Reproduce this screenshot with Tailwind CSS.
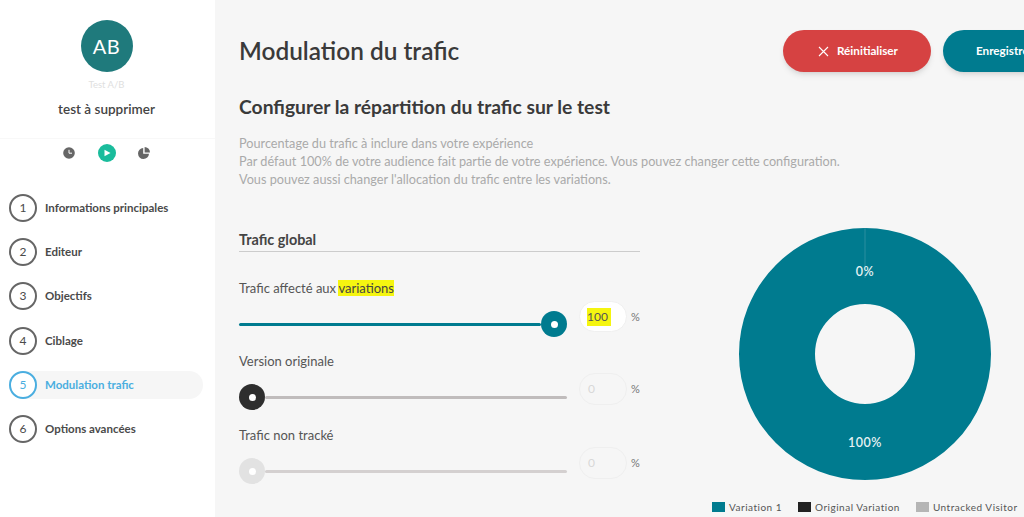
<!DOCTYPE html>
<html lang="fr">
<head>
    <meta charset="UTF-8">
    <title>Modulation du trafic</title>
    <script src="https://cdn.jsdelivr.net/npm/@tailwindcss/browser@4"></script>
</head>
<body class="bg-[#f6f6f6] h-[517px] w-[1024px] overflow-hidden font-['Lato',sans-serif] text-[#3a3a3a]">
    <div class="flex h-[517px]">
        <!-- Sidebar -->
        <aside class="w-[215px] shrink-0 bg-white h-full flex flex-col">
            <div class="flex flex-col items-center pt-[20px] pr-[2px] h-[139px] border-b border-[#f8f8f8]">
                <div class="w-[52px] h-[52px] rounded-full bg-[#1f7a7c] text-white text-[20px] tracking-[0.5px] flex items-center justify-center">AB</div>
                <div class="text-[9.5px] leading-[12px] text-[#e0e0e0] mt-[7px]">Test A/B</div>
                <div class="text-[13.5px] leading-[18px] font-semibold text-[#444] mt-[9px]">test à supprimer</div>
            </div>
            <div class="flex items-center pl-[63px] h-[28px] mb-[27px]">
                <svg width="12" height="12" viewBox="1 1 12 12" class="mr-[23px]"><circle cx="7" cy="7" r="5.8" fill="#666"/><path d="M7 3.8V7.2H10" stroke="#fff" stroke-width="1" fill="none"/></svg>
                <svg width="18" height="18" viewBox="0 0 18 18" class="mr-[21px]"><circle cx="9" cy="9" r="9" fill="#1abc9c"/><path d="M6.5 5.8L12.5 9L6.5 12.2Z" fill="#fff"/></svg>
                <svg width="14" height="14" viewBox="0 0 14 14"><path d="M6.2 2A5.5 5.5 0 1 0 12 7.8H6.2Z" fill="#666"/><path d="M7.6 1A5.5 5.5 0 0 1 13 6.4H7.6Z" fill="#666"/></svg>
            </div>
            <nav class="flex flex-col gap-[16px] pl-[9px] text-[11.5px] font-bold text-[#4a4a4a]">
                <div class="flex items-center h-[28px]"><span class="w-[28px] h-[28px] rounded-full border-2 border-[#666] flex items-center justify-center text-[12px] font-normal mr-[8px]">1</span>Informations principales</div>
                <div class="flex items-center h-[28px]"><span class="w-[28px] h-[28px] rounded-full border-2 border-[#666] flex items-center justify-center text-[12px] font-normal mr-[8px]">2</span>Editeur</div>
                <div class="flex items-center h-[28px]"><span class="w-[28px] h-[28px] rounded-full border-2 border-[#666] flex items-center justify-center text-[12px] font-normal mr-[8px]">3</span>Objectifs</div>
                <div class="flex items-center h-[28px] mt-[1px]"><span class="w-[28px] h-[28px] rounded-full border-2 border-[#666] flex items-center justify-center text-[12px] font-normal mr-[8px]">4</span>Ciblage</div>
                <div class="flex items-center h-[28px] w-[194px] rounded-full bg-[#f6f6f6] text-[#4aaee0]"><span class="w-[28px] h-[28px] rounded-full border-2 border-[#4aaee0] bg-white flex items-center justify-center text-[12px] font-normal mr-[8px]">5</span>Modulation trafic</div>
                <div class="flex items-center h-[28px]"><span class="w-[28px] h-[28px] rounded-full border-2 border-[#666] flex items-center justify-center text-[12px] font-normal mr-[8px]">6</span>Options avancées</div>
            </nav>
        </aside>

        <!-- Main -->
        <main class="flex-1 pl-[24px] min-w-0">
            <div class="flex items-center h-[42px] mt-[30px]">
                <h1 class="text-[24.4px] font-semibold text-[#3a3a3a] w-[544px] shrink-0">Modulation du trafic</h1>
                <button class="w-[148px] h-[42px] shrink-0 rounded-full bg-[#d64242] text-white text-[11.7px] font-bold flex items-center pl-[35px] gap-[8px] shadow-md">
                    <svg width="11" height="11" viewBox="0 0 11 11"><path d="M1 1L10 10M10 1L1 10" stroke="#fff" stroke-width="1.1"/></svg>
                    Réinitialiser
                </button>
                <button class="w-[148px] h-[42px] shrink-0 ml-[12px] rounded-full bg-[#007b8f] text-white text-[11.7px] font-bold text-left pl-[33px] shadow-md">Enregistrer</button>
            </div>
            <h2 class="text-[19.3px] leading-[24px] font-bold text-[#3a3a3a] mt-[23px]">Configurer la répartition du trafic sur le test</h2>
            <p class="text-[12.7px] leading-[18px] text-[#aaaaaa] mt-[15px]">
                Pourcentage du trafic à inclure dans votre expérience<br>
                Par défaut 100% de votre audience fait partie de votre expérience. Vous pouvez changer cette configuration.<br>
                Vous pouvez aussi changer l'allocation du trafic entre les variations.
            </p>

            <div class="flex mt-[40px]">
                <!-- Sliders -->
                <section class="w-[401px] shrink-0">
                    <h3 class="text-[14.4px] leading-[24px] font-bold text-[#444] border-b border-[#cccccc] h-[23px] box-content">Trafic global</h3>

                    <div class="text-[13px] leading-[18px] text-[#555] mt-[27px]">Trafic affecté aux <mark class="bg-[#f5f510] text-[#444] -ml-[1px]">variations</mark></div>
                    <div class="flex items-start h-[40px] mt-[3px]">
                        <div class="w-[328px] flex items-center mt-[11px]">
                            <div class="w-[302px] h-[3px] bg-[#007b8f] rounded-full"></div>
                            <div class="w-[26px] h-[26px] rounded-full bg-[#007b8f] flex items-center justify-center"><span class="w-[7px] h-[7px] rounded-full bg-white"></span></div>
                        </div>
                        <div class="w-[48px] h-[31px] mt-[1px] ml-[12px] rounded-full bg-white border border-[#f0f0f0] text-[12px] text-[#555] flex items-center pl-[7px]"><mark class="bg-[#f5f510] text-[#555] pr-[3px]">100</mark></div>
                        <span class="text-[11px] leading-[31px] mt-[1px] text-[#777] ml-[4px]">%</span>
                    </div>

                    <div class="text-[13px] leading-[18px] text-[#555] mt-[12px]">Version originale</div>
                    <div class="flex items-start h-[40px] mt-[3px]">
                        <div class="w-[328px] flex items-center mt-[11px]">
                            <div class="w-[26px] h-[26px] rounded-full bg-[#2e2e2e] flex items-center justify-center shrink-0"><span class="w-[7px] h-[7px] rounded-full bg-white"></span></div>
                            <div class="flex-1 h-[3px] bg-[#c0bcbc] rounded-full"></div>
                        </div>
                        <div class="w-[48px] h-[32px] ml-[12px] rounded-full border border-[#efefef] text-[12px] text-[#d8d8d8] flex items-center pl-[8px]">0</div>
                        <span class="text-[11px] leading-[32px] text-[#777] ml-[4px]">%</span>
                    </div>

                    <div class="text-[13px] leading-[18px] text-[#555] mt-[13px]">Trafic non tracké</div>
                    <div class="flex items-start h-[40px] mt-[3px]">
                        <div class="w-[328px] flex items-center mt-[11px]">
                            <div class="w-[26px] h-[26px] rounded-full bg-[#e2e2e2] flex items-center justify-center shrink-0"><span class="w-[7px] h-[7px] rounded-full bg-white"></span></div>
                            <div class="flex-1 h-[3px] bg-[#d4d0d0] rounded-full"></div>
                        </div>
                        <div class="w-[48px] h-[32px] ml-[12px] rounded-full border border-[#efefef] text-[12px] text-[#d8d8d8] flex items-center pl-[8px]">0</div>
                        <span class="text-[11px] leading-[32px] text-[#777] ml-[4px]">%</span>
                    </div>
                </section>

                <!-- Donut and legend -->
                <section class="ml-[71px] mt-[0px] w-[320px] shrink-0 flex flex-col">
                    <svg width="252" height="252" viewBox="0 0 252 252" class="ml-[28px] shrink-0">
                        <circle cx="126" cy="126" r="88" fill="none" stroke="#007b8f" stroke-width="76"/>
                        <path d="M126 0V50" stroke="#2a8f9f" stroke-width="1"/>
                        <text x="126" y="48" text-anchor="middle" fill="#e6f2f4" font-size="12.5" font-weight="600" font-family="Lato" letter-spacing="0.5">0%</text>
                        <text x="126" y="219" text-anchor="middle" fill="#e6f2f4" font-size="12.5" font-weight="600" font-family="Lato" letter-spacing="0.5">100%</text>
                    </svg>
                    <div class="flex items-center mt-[21px] ml-[1px] text-[10px] leading-[12px] tracking-[0.5px] text-[#555] whitespace-nowrap">
                        <span class="w-[13px] h-[10px] bg-[#007b8f] mr-[4px]"></span>Variation 1
                        <span class="w-[13px] h-[10px] bg-[#222] ml-[16px] mr-[4px]"></span>Original Variation
                        <span class="w-[13px] h-[10px] bg-[#b5b5b5] ml-[16px] mr-[4px]"></span>Untracked Visitor
                    </div>
                </section>
            </div>
        </main>
    </div>
</body>
</html>
